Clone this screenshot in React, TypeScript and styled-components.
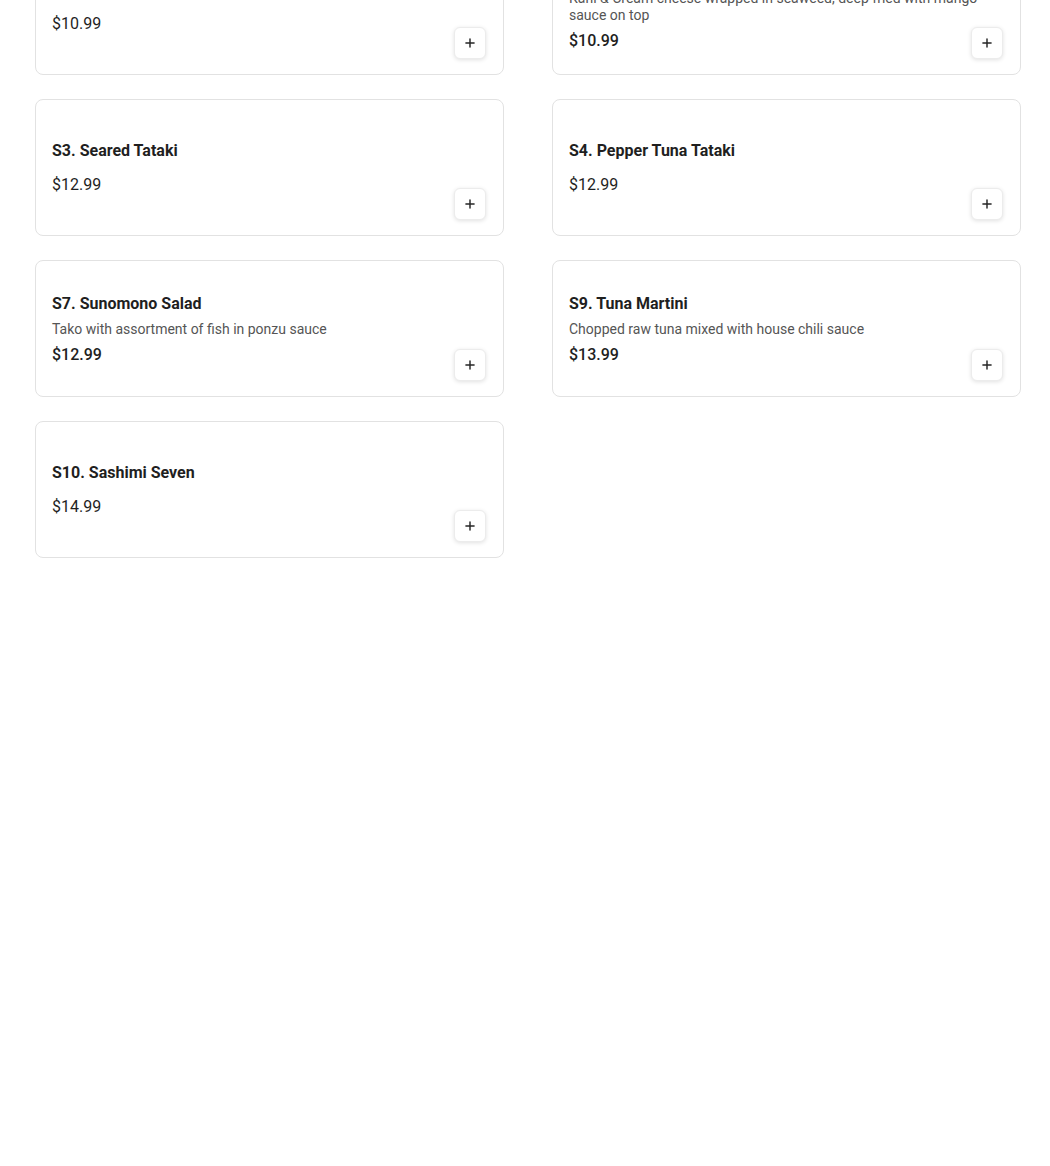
import React from "react";
import styled, { createGlobalStyle } from "styled-components";
import { Plus } from "lucide-react";

const Global = createGlobalStyle`
  html, body {
    margin: 0;
    padding: 0;
    background: #ffffff;
    font-family: Roboto, "Liberation Sans", Arial, sans-serif;
    overflow: hidden;
  }
`;

const Page = styled.div`
  width: 1050px;
  height: 1166px;
  overflow: hidden;
`;

const Grid = styled.div`
  display: grid;
  grid-template-columns: 469px 469px;
  column-gap: 48px;
  row-gap: 24px;
  margin-top: -62px;
  padding-left: 35px;
`;

const Card = styled.div`
  box-sizing: border-box;
  height: 137px;
  border: 1px solid #e2e2e2;
  border-radius: 8px;
  background: #fff;
  padding: 16px 17px 15px 16px;
  display: grid;
  grid-template-columns: 1fr;
  grid-template-rows: 1fr;
  grid-template-areas: "stack";
`;

const Info = styled.div`
  grid-area: stack;
  align-self: center;
  display: flex;
  flex-direction: column;
  min-width: 0;
  padding-right: 8px;
`;

const Title = styled.div`
  font-size: 16px;
  line-height: 24px;
  font-weight: 700;
  color: #1f1f1f;
`;

const Desc = styled.div`
  font-size: 14px;
  line-height: 17px;
  color: #555555;
  margin-top: 5px;
`;

const Price = styled.div<{ $tight: boolean }>`
  font-size: 16px;
  line-height: 24px;
  font-weight: ${(p) => (p.$tight ? 500 : 400)};
  color: #1f1f1f;
  margin-top: ${(p) => (p.$tight ? "5px" : "10px")};
`;

const AddButton = styled.button`
  grid-area: stack;
  align-self: end;
  justify-self: end;
  width: 32px;
  height: 32px;
  padding: 0;
  display: flex;
  align-items: center;
  justify-content: center;
  background: #fff;
  border: 1px solid #ececec;
  border-radius: 6px;
  box-shadow: 0 1px 4px rgba(0, 0, 0, 0.12);
  color: #262626;
  cursor: pointer;
`;

type Item = { title: string; desc?: string; price: string };

const items: Item[] = [
  { title: "S1. Sashimi Appetizer", price: "$10.99" },
  {
    title: "S2. Crispy Kani Roll",
    desc: "Kani & Cream cheese wrapped in seaweed, deep fried with mango sauce on top",
    price: "$10.99",
  },
  { title: "S3. Seared Tataki", price: "$12.99" },
  { title: "S4. Pepper Tuna Tataki", price: "$12.99" },
  {
    title: "S7. Sunomono Salad",
    desc: "Tako with assortment of fish in ponzu sauce",
    price: "$12.99",
  },
  {
    title: "S9. Tuna Martini",
    desc: "Chopped raw tuna mixed with house chili sauce",
    price: "$13.99",
  },
  { title: "S10. Sashimi Seven", price: "$14.99" },
];

export default function App() {
  return (
    <Page>
      <Global />
      <Grid>
        {items.map((it) => (
          <Card key={it.title}>
            <Info>
              <Title>{it.title}</Title>
              {it.desc && <Desc>{it.desc}</Desc>}
              <Price $tight={!!it.desc}>{it.price}</Price>
            </Info>
            <AddButton aria-label="Add">
              <Plus size={14} strokeWidth={2.5} />
            </AddButton>
          </Card>
        ))}
      </Grid>
    </Page>
  );
}
